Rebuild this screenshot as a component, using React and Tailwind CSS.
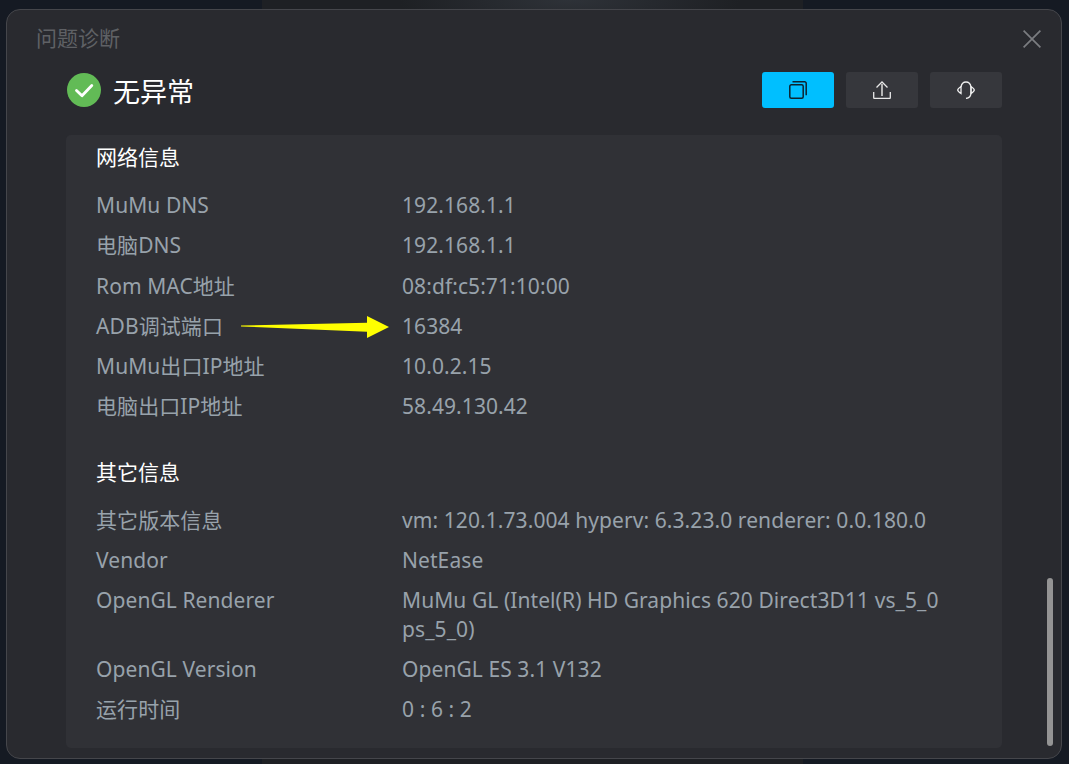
import React from 'react';

const network = [
  ['MuMu DNS', '192.168.1.1'],
  ['电脑DNS', '192.168.1.1'],
  ['Rom MAC地址', '08:df:c5:71:10:00'],
  ['ADB调试端口', '16384'],
  ['MuMu出口IP地址', '10.0.2.15'],
  ['电脑出口IP地址', '58.49.130.42'],
];

const other = [
  ['其它版本信息', 'vm: 120.1.73.004 hyperv: 6.3.23.0 renderer: 0.0.180.0'],
  ['Vendor', 'NetEase'],
  ['OpenGL Renderer', 'MuMu GL (Intel(R) HD Graphics 620 Direct3D11 vs_5_0 ps_5_0)'],
  ['OpenGL Version', 'OpenGL ES 3.1 V132'],
  ['运行时间', '0 : 6 : 2'],
];

const Row = ({ label, value }) => (
  <div className="flex py-[6px] text-[21px] leading-[28.3px] tracking-[0.08px] text-[#98a2ab]">
    <div className="w-[306px] shrink-0">{label}</div>
    <div className="w-[564px]">{value}</div>
  </div>
);

const App = () => {
  return (
    <div
      className="h-screen overflow-hidden bg-[radial-gradient(ellipse_170px_40px_at_570px_0px,#2e3238,transparent),linear-gradient(90deg,#151a23_262px,#1e2024_262px,#1e2024_803px,#151a23_803px)] pt-[9px] px-[6px]"
      style={{ fontFamily: '"Noto Sans", "Noto Sans CJK SC", sans-serif' }}
    >
      <div className="relative h-[750px] w-[1056px] rounded-[14px] border border-[#45464b] bg-[#292a2f]">
        <div className="flex h-[44px] items-start justify-between pl-[29px] pr-[20px] pt-[12px]">
          <div className="text-[21px] leading-[32px] text-[#5f6165]">问题诊断</div>
          <svg className="mt-[8px]" width="18" height="18" viewBox="0 0 18 18" fill="none" stroke="#7b7d81" strokeWidth="1.7">
            <path d="M.6.6l16.8 16.8M17.4.6L.6 17.4" />
          </svg>
        </div>

        <div className="mt-[18px] flex h-[36px] items-center justify-between pl-[60px] pr-[59px]">
          <div className="flex items-center gap-[12px]">
            <svg width="34" height="34" viewBox="0 0 34 34">
              <circle cx="17" cy="17" r="17" fill="#62bb56" />
              <path d="M9.5 17.5L15 22.8L24.8 12.5" fill="none" stroke="#fff" strokeWidth="2.8" strokeLinecap="round" strokeLinejoin="round" />
            </svg>
            <div className="pt-[3px] text-[27px] leading-[36px] text-white">无异常</div>
          </div>
          <div className="flex gap-[12px]">
            <button className="flex h-[36px] w-[72px] items-center justify-center rounded-[3px] bg-[#00bfff]">
              <svg width="18" height="18" viewBox="0 0 18 18" fill="none" stroke="#0d2430" strokeWidth="1.5">
                <rect x=".8" y="3.8" width="13.4" height="13.4" rx="1.5" />
                <path d="M3.5.8h12.2a1.5 1.5 0 0 1 1.5 1.5v12" />
              </svg>
            </button>
            <button className="flex h-[36px] w-[72px] items-center justify-center rounded-[3px] bg-[#36373c]">
              <svg width="18" height="18" viewBox="0 0 18 18" fill="none">
                <path d="M9 3v12" stroke="#b5b5b5" strokeWidth="2" />
                <path d="M.7 11v5.5a1 1 0 0 0 1 1h14.6a1 1 0 0 0 1-1V11M3.5 6.5L9 1l5.5 5.5" stroke="#e8e8e8" strokeWidth="1.3" />
              </svg>
            </button>
            <button className="flex h-[36px] w-[72px] items-center justify-center rounded-[3px] bg-[#36373c]">
              <svg width="18" height="18" viewBox="0 0 18 18" fill="none" stroke="#eeeeee" strokeWidth="1.3">
                <path d="M4 6C4.5 3 6.8 1 9 1s4.5 2 5 5v6c0 3-2 5-5 5.5" />
                <path d="M4 5.5C2 6.8.7 8 .7 9s1.3 2.2 3.3 3.5zM14 5.5c2 1.3 3.3 2.5 3.3 3.5s-1.3 2.2-3.3 3.5z" />
              </svg>
            </button>
          </div>
        </div>

        <div className="ml-[59px] mt-[27px] h-[613px] w-[936px] overflow-hidden rounded-[5px] bg-[#303136] px-[30px] pt-[6px]">
          <div className="mb-[12px] text-[21px] leading-[32px] text-white">网络信息</div>
          <div className="relative">
            {network.map(([label, value]) => (
              <Row key={label} label={label} value={value} />
            ))}
            <svg className="absolute left-[145px] top-[130px]" width="149" height="24" viewBox="0 0 149 24">
              <path d="M0 10.5L126 7.7V1l22 11-22 11v-6.3L0 11.5z" fill="#ffff00" />
            </svg>
          </div>
          <div className="mb-[12px] mt-[29px] text-[21px] leading-[32px] text-white">其它信息</div>
          {other.map(([label, value]) => (
            <Row key={label} label={label} value={value} />
          ))}
        </div>

        <div className="absolute bottom-[12px] right-[8px] h-[168px] w-[6px] rounded-full bg-[#949494]" />
      </div>
    </div>
  );
};

export default App;
